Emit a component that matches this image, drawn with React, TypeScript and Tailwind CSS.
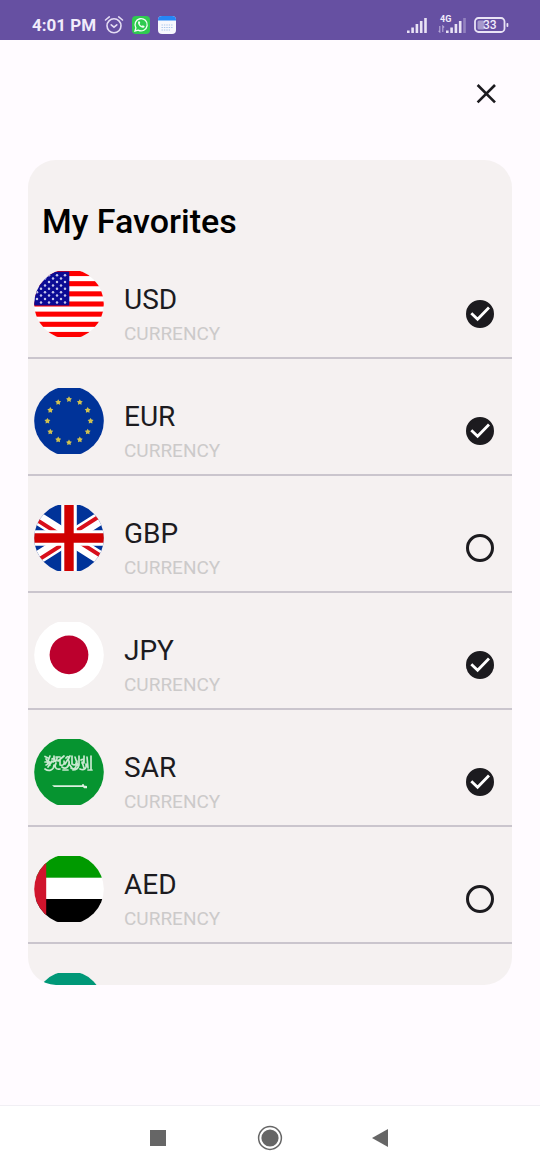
import { useId, useState, type ReactNode } from "react";

type Currency = { code: string; flag: ReactNode; favorite: boolean };

function starPoints(cx: number, cy: number, r: number) {
  return Array.from({ length: 10 }, (_, i) => {
    const a = (Math.PI / 5) * i - Math.PI / 2;
    const d = i % 2 ? r * 0.55 : r;
    return `${(cx + d * Math.cos(a)).toFixed(2)},${(cy + d * Math.sin(a)).toFixed(2)}`;
  }).join(" ");
}

function Flag({ children }: { children: ReactNode }) {
  const id = useId();
  return (
    <svg viewBox="0 0 70 66" className="h-[66px] w-[70px] shrink-0" aria-hidden="true">
      <clipPath id={id}>
        <circle cx="35" cy="33" r="34.8" />
      </clipPath>
      <g clipPath={`url(#${id})`}>{children}</g>
    </svg>
  );
}

const usa = (
  <>
    <rect width="70" height="66" fill="#fff" />
    {[0, 2, 4, 6, 8, 10, 12].map((i) => (
      <rect key={i} y={(i * 66) / 13} width="70" height={66 / 13} fill="#fe0000" />
    ))}
    <rect y="0.6" width="35.3" height="33.9" fill="#0b0b94" />
    {Array.from({ length: 9 }, (_, row) =>
      Array.from({ length: 4 }, (_, col) => (
        <circle
          key={`${row}-${col}`}
          cx={(row % 2 ? 27 : 31) - col * 8}
          cy={4.2 + row * 3.4}
          r="1.25"
          fill="#c4c4ea"
        />
      ))
    )}
  </>
);

const eu = (
  <>
    <rect width="70" height="66" fill="#003399" />
    {Array.from({ length: 12 }, (_, i) => {
      const a = (Math.PI / 6) * i;
      return (
        <polygon
          key={i}
          points={starPoints(35 + 21.6 * Math.cos(a), 33 + 21.6 * Math.sin(a), 3.1)}
          fill="#d0c150"
        />
      );
    })}
  </>
);

const uk = (
  <>
    <clipPath id="saltire-halves">
      <path d="M35 33H87V66ZM35 33V66H-17ZM35 33H-17V0ZM35 33V0H87Z" />
    </clipPath>
    <rect width="70" height="66" fill="#003399" />
    <path d="M-17 0L87 66M87 0L-17 66" stroke="#fff" strokeWidth="13" />
    <path
      d="M-17 0L87 66M87 0L-17 66"
      stroke="#d80f1b"
      strokeWidth="8"
      clipPath="url(#saltire-halves)"
    />
    <path d="M35 0V66M0 33H70" stroke="#fff" strokeWidth="15.6" />
    <path d="M35 0V66M0 33H70" stroke="#d00000" strokeWidth="9.4" />
  </>
);

const japan = (
  <>
    <rect width="70" height="66" fill="#fff" />
    <circle cx="35" cy="32.8" r="19.4" fill="#bc002d" />
  </>
);

const saudi = (
  <>
    <rect width="70" height="66" fill="#069430" />
    <g fill="none" stroke="#c9e8d0" strokeWidth="1.7" strokeLinecap="round" strokeLinejoin="round">
      <path d="M11 17.5l3 1.5M16 17l-2 5 3 2M11 23c3-1 4 2 1 3M18 20c3-2 4 1 1 3M11 30c4 3 9 1 9-4M14 28l4-6M20 17v5c2 1 3-1 3-3M22 24c-2 4 0 7 4 6M24 22l6-5M26 20v6c3 1 5-1 4-4M28 28c4 3 8-1 7-6M31 25l5-8M32 19c2-3 4 0 2 2M37 29c3 2 6 0 5-5M38 17v8c3 2 5 0 5-3M41 18l3 9M45 17v9c-1 4-4 5-6 5M47 21c3-2 4 2 1 3M46 30c4 2 7-1 6-5M50 17v7M53 18l1 11M57 17v14M54 31h4M50 29l-2-6M34 31h-5M22 18h4M12 20l4 6M35 25l3 4" />
    </g>
    <path d="M18 46.2h30v-1h2v1.2l3 .5v2.4h-3l-1-1.2H20z" fill="#dcf0e0" />
  </>
);

const uae = (
  <>
    <rect width="70" height="66" fill="#fff" />
    <rect width="70" height="21.7" fill="#009a00" />
    <rect y="43" width="70" height="23" fill="#000" />
    <rect width="12.2" height="66" fill="#d0142c" />
  </>
);

const teal = <rect width="70" height="66" fill="#009878" />;

const currencies: Currency[] = [
  { code: "USD", flag: usa, favorite: true },
  { code: "EUR", flag: eu, favorite: true },
  { code: "GBP", flag: uk, favorite: false },
  { code: "JPY", flag: japan, favorite: true },
  { code: "SAR", flag: saudi, favorite: true },
  { code: "AED", flag: uae, favorite: false },
];

function CurrencyRow({ code, flag, favorite }: Currency) {
  const [checked, setChecked] = useState(favorite);
  return (
    <li className="border-b-2 border-[#cac5cd]">
      <label className="flex h-[115px] cursor-pointer items-start pt-[29px] pr-[18px] pl-1.5">
        <Flag>{flag}</Flag>
        <span className="ml-5 flex flex-1 flex-col pt-[11px]">
          <span className="text-[28px] leading-9 text-[#1c1b1f]">{code}</span>
          <span className="text-[19px] leading-8 text-[#cccaca]">CURRENCY</span>
        </span>
        <span className="mt-[29px] grid size-7 place-items-center">
          <input
            type="checkbox"
            checked={checked}
            onChange={(e) => setChecked(e.target.checked)}
            className="size-7 cursor-pointer appearance-none rounded-full border-[3px] border-[#1c1b1f] [grid-area:1/1] checked:bg-[#1c1b1f]"
          />
          {checked && (
            <svg viewBox="0 0 28 28" className="pointer-events-none size-7 [grid-area:1/1]" aria-hidden="true">
              <path d="M5.3 13.2L11.6 19.3L23 7.6" fill="none" stroke="#fff" strokeWidth="2.8" />
            </svg>
          )}
        </span>
      </label>
    </li>
  );
}

function SignalBars({ faded = false }: { faded?: boolean }) {
  return (
    <svg viewBox="0 0 20 16" className="h-4 w-5" fill="#e9e3f5" aria-hidden="true">
      <rect x="0" y="13.5" width="2.6" height="2.5" />
      <rect x="4.3" y="10.5" width="2.6" height="5.5" />
      <rect x="8.6" y="7" width="2.6" height="9" />
      <rect x="12.9" y="4" width="2.6" height="12" />
      <rect x="17.2" y="1" width="2.6" height="15" opacity={faded ? 0.35 : 1} />
    </svg>
  );
}

function StatusBar() {
  return (
    <header className="flex h-10 shrink-0 items-center bg-[#6650a2] pt-2.5 pr-[31px] pl-8 text-[#f1ecfb]">
      <time className="text-[17px] leading-5 font-bold">4:01 PM</time>
      <svg viewBox="0 0 20 20" className="ml-2 size-5" fill="none" stroke="#e4dcf3" strokeWidth="1.6" strokeLinecap="round" aria-hidden="true">
        <circle cx="10" cy="10.8" r="7" />
        <path d="M7.2 9.8L10 12.2L12.8 9.8M1.5 5L5.3 1.9M18.5 5L14.7 1.9" />
      </svg>
      <svg viewBox="0 0 18 18" className="ml-2 size-[18px]" aria-hidden="true">
        <rect width="18" height="18" rx="4" fill="#2fcb50" />
        <path d="M3 15l.9-3.1a6.1 6.1 0 1 1 2.3 2.2z" fill="none" stroke="#f4fff6" strokeWidth="1.3" />
        <path d="M6.3 5.6c.6-.7 1.2-.5 1.4 0l.5 1.2c.1.3-.2.7-.6 1.1.5 1 1.3 1.7 2.4 2.2.4-.5.7-.9 1.1-.7l1.2.6c.5.3.2 1.2-.4 1.6-2.6 1.3-7-3.2-5.6-6z" fill="#f4fff6" />
      </svg>
      <svg viewBox="0 0 18 18" className="ml-2 size-[18px]" aria-hidden="true">
        <rect width="18" height="18" rx="4" fill="#f7f8fd" />
        <path d="M0 4.5V4a4 4 0 0 1 4-4h10a4 4 0 0 1 4 4v.5z" fill="#2586f5" />
        <path d="M3.5 9h11M3.5 11.5h11M3.5 14h8.5" stroke="#a9c6ea" strokeWidth="1.2" strokeDasharray="1.4 1" />
      </svg>
      <div className="ml-auto flex items-end">
        <SignalBars />
        <div className="relative ml-[11px] flex items-end">
          <span className="absolute -top-1 left-0.5 text-[9px] leading-3 font-bold">4G</span>
          <svg viewBox="0 0 8 8" className="size-2" fill="none" stroke="#b9acd9" strokeWidth="1.1" aria-hidden="true">
            <path d="M1.8 1V7L.6 5.8M4.8 7V1L6.2 2.4" />
          </svg>
          <SignalBars faded />
        </div>
        <svg viewBox="0 0 35 16" className="ml-2 h-4 w-[35px]" aria-label="Battery 33 percent">
          <rect x="1" y="1" width="29.5" height="14" rx="3.5" fill="none" stroke="#e9e3f5" strokeWidth="1.8" />
          <rect x="3.5" y="3.5" width="7" height="9" rx="1.5" fill="#a699cc" />
          <rect x="32.5" y="6" width="1.8" height="4" rx=".8" fill="#e9e3f5" />
          <text x="15.8" y="12.2" textAnchor="middle" fontSize="12" fontWeight="500" fill="#f1ecfb">33</text>
        </svg>
      </div>
    </header>
  );
}

function NavigationBar() {
  return (
    <nav className="flex h-[65px] shrink-0 items-center justify-center gap-[84px] border-t border-[#f1eff4] bg-white">
      <button type="button" aria-label="Recent apps" className="grid size-7 place-items-center">
        <span className="size-4 bg-[#666]" />
      </button>
      <button type="button" aria-label="Home" className="grid size-7 place-items-center">
        <svg viewBox="0 0 26 26" className="size-[26px]" aria-hidden="true">
          <circle cx="13" cy="13" r="11.4" fill="none" stroke="#666" strokeWidth="1.5" />
          <circle cx="13" cy="13" r="8.6" fill="#666" />
        </svg>
      </button>
      <button type="button" aria-label="Back" className="grid size-7 place-items-center">
        <svg viewBox="0 0 20 18" className="h-[18px] w-5" aria-hidden="true">
          <path d="M0 9L16 0V18Z" fill="#666" />
        </svg>
      </button>
    </nav>
  );
}

export default function App() {
  return (
    <div className="flex h-screen flex-col bg-[#fffbff] font-[Roboto,sans-serif]">
      <StatusBar />
      <main className="flex min-h-0 flex-1 flex-col px-7 pb-[120px]">
        <div className="flex h-[120px] shrink-0 items-start justify-end pt-9 pr-2">
          <button type="button" aria-label="Close" className="grid size-9 place-items-center">
            <svg viewBox="0 0 20 20" className="size-5" aria-hidden="true">
              <path d="M1.6 1L19 18.4M19 1L1.6 18.4" fill="none" stroke="#1c1b1f" strokeWidth="2.6" />
            </svg>
          </button>
        </div>
        <section className="min-h-0 flex-1 overflow-y-auto rounded-[28px] bg-[#f5f1f1] [scrollbar-width:none]">
          <h1 className="px-3.5 pt-10 text-[34px] leading-[42px] font-medium text-black">My Favorites</h1>
          <ul>
            {currencies.map((c) => (
              <CurrencyRow key={c.code} {...c} />
            ))}
            <li className="h-[115px] pt-[29px] pl-1.5">
              <Flag>{teal}</Flag>
            </li>
          </ul>
        </section>
      </main>
      <NavigationBar />
    </div>
  );
}
